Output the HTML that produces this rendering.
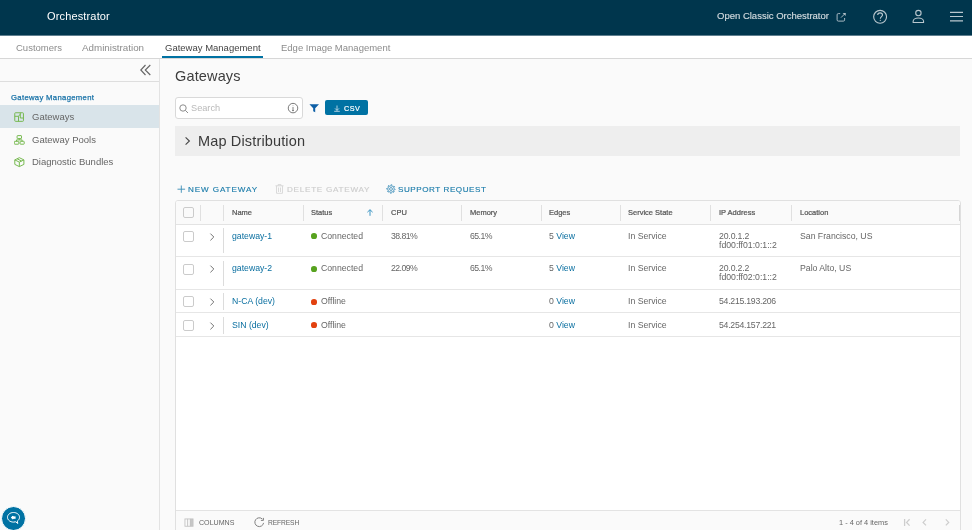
<!DOCTYPE html>
<html><head><meta charset="utf-8">
<style>
*{box-sizing:border-box;margin:0;padding:0}
html,body{width:972px;height:530px;overflow:hidden;background:#fafafa;font-family:"Liberation Sans",sans-serif;position:relative}
.a{position:absolute;white-space:nowrap;line-height:1;will-change:transform}
#hdr{position:absolute;left:0;top:0;width:972px;height:35px;background:#00364d}
#hdrline{position:absolute;left:0;top:35px;width:972px;height:1px;background:#5f7f8f}
#tabs{position:absolute;left:0;top:36px;width:972px;height:22px;background:#fff}
#tabline{position:absolute;left:0;top:58px;width:972px;height:1px;background:#d7d7d7}
#side{position:absolute;left:0;top:59px;width:159px;height:471px;background:#fafafa}
#sideb{position:absolute;left:159px;top:59px;width:1px;height:471px;background:#e3e3e3}
.tab{font-size:9.5px;color:#8c8c8c}
.nav{font-size:9.5px;color:#666}
.th{font-size:7.5px;color:#565656;-webkit-text-stroke-width:0.22px}
.td{font-size:8.7px;color:#666}
.pct{letter-spacing:-0.55px}
.ip{letter-spacing:-0.2px}
.lnk{color:#0a6fa0}
.vl{position:absolute;width:1px;background:#dcdcdc}
.hl{position:absolute;height:1px;background:#e3e3e3}
.cb{position:absolute;width:11px;height:11px;border:1px solid #b3b3b3;border-radius:2px;background:#fff}
.act{font-size:8.1px;letter-spacing:0.9px;color:#1b7caa;-webkit-text-stroke-width:0.15px}
</style></head><body>
<div id="hdr"></div><div id="hdrline"></div>
<div class="a" style="left:46.5px;top:10.8px;font-size:11px;letter-spacing:0.15px;color:#fff">Orchestrator</div>
<div class="a" style="left:716.5px;top:11.3px;font-size:9.5px;color:#d3dbdf;-webkit-text-stroke:0.15px #d3dbdf">Open Classic Orchestrator</div>
<!-- header icons -->
<svg class="a" style="left:835.6px;top:11.6px" width="11" height="11" viewBox="0 0 11 11" fill="none" stroke="#b0c0c8" stroke-width="0.95">
  <path d="M4.2 1.6H2.3Q1.1 1.6 1.1 2.8V7.9Q1.1 9.1 2.3 9.1H7.4Q8.6 9.1 8.6 7.9V6"/><path d="M5 5.6L9.2 1.4"/><path d="M6.6 0.9H9.7V4Z" fill="#b0c0c8" stroke="none"/>
</svg>
<svg class="a" style="left:872px;top:9px" width="16" height="16" viewBox="0 0 16 16" fill="none" stroke="#b9c7ce" stroke-width="1.1">
  <circle cx="8.1" cy="7.8" r="6.45"/>
  <path d="M5.7 6.1C5.7 4.6 6.8 3.9 8.1 3.9C9.5 3.9 10.5 4.8 10.5 6C10.5 7.6 8.3 7.8 8.3 9.8"/>
  <circle cx="8.3" cy="11.3" r="0.65" fill="#b9c7ce" stroke="none"/>
</svg>
<svg class="a" style="left:911px;top:9px" width="15" height="16" viewBox="0 0 15 16" fill="none" stroke="#b9c7ce" stroke-width="1.1">
  <circle cx="7.4" cy="4.05" r="2.7"/>
  <path d="M2.15 13.45V12.2C2.15 10.4 4.5 8.95 7.35 8.95C10.2 8.95 12.55 10.4 12.55 12.2V13.45Z"/>
</svg>
<svg class="a" style="left:949px;top:11px" width="15" height="11" viewBox="0 0 15 11" stroke="#b9c7ce" stroke-width="1.1">
  <path d="M1 1.4H14M1 5.5H14M1 9.9H14"/>
</svg>

<div id="tabs"></div><div id="tabline"></div>
<div class="a tab" style="left:16px;top:43px">Customers</div>
<div class="a tab" style="left:82.3px;top:43px;font-size:9.8px;top:42.8px">Administration</div>
<div class="a tab" style="left:164.5px;top:43px;color:#454545">Gateway Management</div>
<div class="a tab" style="left:281px;top:43px">Edge Image Management</div>
<div class="a" style="left:162px;top:56px;width:101px;height:2px;background:#0072a3"></div>

<div id="side"></div><div id="sideb"></div>
<svg class="a" style="left:139px;top:64px" width="14" height="12" viewBox="0 0 14 12" fill="none" stroke="#666" stroke-width="1">
  <path d="M6.5 1L1.8 6L6.5 11M11.3 1L6.3 6L11.3 11" stroke-width="1.15"/>
</svg>
<div class="a" style="left:0;top:81px;width:159px;height:1px;background:#dedede"></div>
<div class="a" style="left:10.8px;top:94.2px;font-size:7.7px;letter-spacing:0.33px;color:#1a73a8;-webkit-text-stroke:0.25px #1a73a8">Gateway Management</div>
<div class="a" style="left:0;top:105px;width:159px;height:23px;background:#d9e4ea"></div>
<div class="a nav" style="left:31.9px;top:112.2px">Gateways</div>
<div class="a nav" style="left:31.9px;top:135.3px">Gateway Pools</div>
<div class="a nav" style="left:31.9px;top:157.4px">Diagnostic Bundles</div>
<svg class="a" style="left:14px;top:111.5px" width="11" height="11" viewBox="0 0 11 11" fill="none" stroke="#72b64a" stroke-width="0.95">
  <rect x="0.75" y="0.75" width="8.7" height="8.6" rx="0.8"/>
  <path d="M0.75 4.3H4.5V9.35M4.5 4.3L6.3 2.1V0.75M6.3 2.1V6H9.45"/>
</svg>
<svg class="a" style="left:14px;top:134.5px" width="11" height="10" viewBox="0 0 11 10" fill="none" stroke="#72b64a" stroke-width="0.95">
  <rect x="3.1" y="0.6" width="4.4" height="3" rx="0.5"/>
  <rect x="0.3" y="6.3" width="4.5" height="2.9" rx="0.5"/>
  <rect x="6.1" y="6.3" width="4.1" height="2.9" rx="0.5"/>
  <path d="M5.3 3.6V4.9M2.5 6.3V4.9H8.1V6.3"/>
</svg>
<svg class="a" style="left:14px;top:157px" width="11" height="11" viewBox="0 0 11 11" fill="none" stroke="#72b64a" stroke-width="0.95">
  <path d="M5.35 0.7L9.9 2.9V7.4L5.35 9.6L0.8 7.4V2.9Z"/>
  <path d="M0.8 2.9L5.35 5.1L9.9 2.9M5.35 5.1V9.6M3.1 1.8L7.6 4"/>
</svg>

<!-- content -->
<div class="a" style="left:175px;top:68.8px;font-size:14.5px;letter-spacing:0.15px;color:#3d3d3d">Gateways</div>
<div class="a" style="left:175px;top:97px;width:128px;height:22px;background:#fff;border:1px solid #d9d9d9;border-radius:3px"></div>
<svg class="a" style="left:178.5px;top:103.5px" width="10" height="10" viewBox="0 0 10 10" fill="none" stroke="#8c8c8c" stroke-width="1">
  <circle cx="4" cy="4" r="3.2"/><path d="M6.4 6.4L9 9"/>
</svg>
<div class="a" style="left:191.2px;top:104.1px;font-size:9.2px;color:#b9b9b9">Search</div>
<svg class="a" style="left:286.5px;top:102px" width="12" height="12" viewBox="0 0 12 12" fill="none" stroke="#737373" stroke-width="0.95">
  <circle cx="6" cy="6.1" r="4.75"/><path d="M6 5V8.6M5 8.6H7" stroke-width="0.9"/><circle cx="6" cy="3.7" r="0.45" fill="#737373" stroke="none"/>
</svg>
<svg class="a" style="left:308.5px;top:103.7px" width="11" height="9" viewBox="0 0 11 9" fill="#0d5fa6">
  <path d="M0.4 0.2H10L6.2 4.2V8.2L4.2 7.2V4.2Z"/>
</svg>
<div class="a" style="left:325px;top:100px;width:43px;height:15px;background:#0072a3;border-radius:2px"></div>
<svg class="a" style="left:334.3px;top:104.6px" width="7" height="7" viewBox="0 0 7 7" fill="none" stroke="#d5e6f0" stroke-width="0.8">
  <path d="M3 0.5V5.4M1 3.4L3 5.4L5 3.4M0.2 6.3H5.8"/>
</svg>
<div class="a" style="left:343.9px;top:104.8px;font-size:7.2px;color:#fff;letter-spacing:0.45px;-webkit-text-stroke:0.2px #fff">CSV</div>

<div class="a" style="left:175px;top:126px;width:785px;height:30px;background:#eeeeee"></div>
<svg class="a" style="left:183.5px;top:136px" width="8" height="10" viewBox="0 0 8 10" fill="none" stroke="#454545" stroke-width="1.1">
  <path d="M1.6 1.3L5.4 5L1.6 8.7"/>
</svg>
<div class="a" style="left:198.3px;top:133.5px;font-size:14.5px;letter-spacing:0.15px;color:#3a3a3a">Map Distribution</div>

<!-- actions -->
<svg class="a" style="left:176.5px;top:185px" width="9" height="9" viewBox="0 0 9 9" fill="none" stroke="#3a8cb5" stroke-width="0.9">
  <path d="M4.3 0.5V7.8M0.5 4.2H8.1"/>
</svg>
<div class="a act" style="left:187.8px;top:185.6px">NEW GATEWAY</div>
<svg class="a" style="left:275px;top:184px" width="9" height="10" viewBox="0 0 9 10" fill="none" stroke="#d6d6d6" stroke-width="0.9">
  <path d="M0.5 1.8H8.5M3 1.8V0.6H6V1.8M1.5 1.8V9.3H7.5V1.8M3.5 3.5V8M5.5 3.5V8"/>
</svg>
<div class="a act" style="left:286.6px;top:185.6px;color:#cdcdcd;letter-spacing:0.75px">DELETE GATEWAY</div>
<svg class="a" style="left:385.8px;top:183.8px" width="10" height="10" viewBox="0 0 10 10" fill="none" stroke="#3f8fb9">
  <circle cx="5" cy="5" r="3.3" stroke-width="0.9"/>
  <circle cx="5" cy="5" r="4.25" stroke-width="1" stroke-dasharray="1.4 1.938" stroke-dashoffset="0.7"/>
  <circle cx="5" cy="5" r="1.45" stroke-width="0.85"/>
</svg>
<div class="a act" style="left:397.8px;top:185.6px;letter-spacing:0.55px">SUPPORT REQUEST</div>

<!-- grid -->
<div class="a" style="left:175px;top:200px;width:786px;height:340px;background:#fff;border:1px solid #e0e0e0;border-radius:3px;overflow:hidden"><div style="position:absolute;left:0;top:0;width:100%;height:24px;background:#fafafa;border-bottom:1px solid #e3e3e3"></div><div style="position:absolute;left:0;top:309px;width:100%;height:40px;background:#fafafa;border-top:1px solid #e3e3e3"></div></div>
<div class="a " style="left:200px;top:205px;width:1px;height:16px;background:#e0e0e0"></div>
<div class="a " style="left:223px;top:205px;width:1px;height:16px;background:#e0e0e0"></div>
<div class="a " style="left:303px;top:205px;width:1px;height:16px;background:#e0e0e0"></div>
<div class="a " style="left:382px;top:205px;width:1px;height:16px;background:#e0e0e0"></div>
<div class="a " style="left:461px;top:205px;width:1px;height:16px;background:#e0e0e0"></div>
<div class="a " style="left:541px;top:205px;width:1px;height:16px;background:#e0e0e0"></div>
<div class="a " style="left:620px;top:205px;width:1px;height:16px;background:#e0e0e0"></div>
<div class="a " style="left:710px;top:205px;width:1px;height:16px;background:#e0e0e0"></div>
<div class="a " style="left:791px;top:205px;width:1px;height:16px;background:#e0e0e0"></div>
<div class="a " style="left:959px;top:205px;width:1px;height:16px;background:#d5d5d5"></div>
<div class="a " style="left:183px;top:207px;width:11px;height:11px;border:1px solid #cbcbcb;border-radius:2px;background:#fff;background:transparent"></div>
<div class="a th" style="left:232px;top:208.55px">Name</div>
<div class="a th" style="left:311.3px;top:208.55px">Status</div>
<div class="a th" style="left:390.7px;top:208.55px">CPU</div>
<div class="a th" style="left:469.6px;top:208.55px">Memory</div>
<div class="a th" style="left:549px;top:208.55px">Edges</div>
<div class="a th" style="left:628.4px;top:208.55px">Service State</div>
<div class="a th" style="left:718.8px;top:208.55px">IP Address</div>
<div class="a th" style="left:799.6px;top:208.55px">Location</div>
<svg class="a" style="left:366px;top:209px" width="8" height="7" viewBox="0 0 8 7" fill="none" stroke="#3d96c4" stroke-width="1"><path d="M4 0.8V6.8M1.4 3.2L4 0.7L6.6 3.2"/></svg>
<div class="a " style="left:183px;top:231.0px;width:11px;height:11px;border:1px solid #cbcbcb;border-radius:2px;background:#fff"></div>
<svg class="a" style="left:208.5px;top:232.5px" width="7" height="8" viewBox="0 0 7 8" fill="none" stroke="#737373" stroke-width="1"><path d="M1.4 0.6L4.8 4L1.4 7.4"/></svg>
<div class="a " style="left:223px;top:228px;width:1px;height:25px;background:#dcdcdc"></div>
<div class="a td lnk" style="left:232px;top:231.55px">gateway-1</div>
<div class="a " style="left:310.5px;top:233.4px;width:5.7px;height:5.7px;border-radius:50%;background:#57a21f"></div>
<div class="a td" style="left:321px;top:231.55px">Connected</div>
<div class="a td pct" style="left:390.7px;top:231.55px">38.81%</div>
<div class="a td pct" style="left:469.6px;top:231.55px">65.1%</div>
<div class="a td" style="left:549px;top:231.55px">5 <span class="lnk">View</span></div>
<div class="a td" style="left:628.4px;top:231.55px">In Service</div>
<div class="a td" style="left:718.8px;top:231.55px;letter-spacing:-0.15px">20.0.1.2</div>
<div class="a td" style="left:718.8px;top:240.55px;letter-spacing:0px">fd00:ff01:0:1::2</div>
<div class="a td" style="left:799.6px;top:231.55px">San Francisco, US</div>
<div class="a " style="left:176px;top:256px;width:784px;height:1px;background:#e6e6e6"></div>
<div class="a " style="left:183px;top:263.7px;width:11px;height:11px;border:1px solid #cbcbcb;border-radius:2px;background:#fff"></div>
<svg class="a" style="left:208.5px;top:265.2px" width="7" height="8" viewBox="0 0 7 8" fill="none" stroke="#737373" stroke-width="1"><path d="M1.4 0.6L4.8 4L1.4 7.4"/></svg>
<div class="a " style="left:223px;top:261px;width:1px;height:25px;background:#dcdcdc"></div>
<div class="a td lnk" style="left:232px;top:264.25px">gateway-2</div>
<div class="a " style="left:310.5px;top:266.1px;width:5.7px;height:5.7px;border-radius:50%;background:#57a21f"></div>
<div class="a td" style="left:321px;top:264.25px">Connected</div>
<div class="a td pct" style="left:390.7px;top:264.25px">22.09%</div>
<div class="a td pct" style="left:469.6px;top:264.25px">65.1%</div>
<div class="a td" style="left:549px;top:264.25px">5 <span class="lnk">View</span></div>
<div class="a td" style="left:628.4px;top:264.25px">In Service</div>
<div class="a td" style="left:718.8px;top:264.25px;letter-spacing:-0.15px">20.0.2.2</div>
<div class="a td" style="left:718.8px;top:273.25px;letter-spacing:0px">fd00:ff02:0:1::2</div>
<div class="a td" style="left:799.6px;top:264.25px">Palo Alto, US</div>
<div class="a " style="left:176px;top:289px;width:784px;height:1px;background:#e6e6e6"></div>
<div class="a " style="left:183px;top:296.1px;width:11px;height:11px;border:1px solid #cbcbcb;border-radius:2px;background:#fff"></div>
<svg class="a" style="left:208.5px;top:297.6px" width="7" height="8" viewBox="0 0 7 8" fill="none" stroke="#737373" stroke-width="1"><path d="M1.4 0.6L4.8 4L1.4 7.4"/></svg>
<div class="a " style="left:223px;top:293px;width:1px;height:17px;background:#dcdcdc"></div>
<div class="a td lnk" style="left:232px;top:296.65px">N-CA (dev)</div>
<div class="a " style="left:310.5px;top:298.5px;width:5.7px;height:5.7px;border-radius:50%;background:#e2410f"></div>
<div class="a td" style="left:321px;top:296.65px">Offline</div>
<div class="a td" style="left:549px;top:296.65px">0 <span class="lnk">View</span></div>
<div class="a td" style="left:628.4px;top:296.65px">In Service</div>
<div class="a td" style="left:718.8px;top:296.65px;letter-spacing:-0.25px">54.215.193.206</div>
<div class="a " style="left:176px;top:312px;width:784px;height:1px;background:#e6e6e6"></div>
<div class="a " style="left:183px;top:320.0px;width:11px;height:11px;border:1px solid #cbcbcb;border-radius:2px;background:#fff"></div>
<svg class="a" style="left:208.5px;top:321.5px" width="7" height="8" viewBox="0 0 7 8" fill="none" stroke="#737373" stroke-width="1"><path d="M1.4 0.6L4.8 4L1.4 7.4"/></svg>
<div class="a " style="left:223px;top:317px;width:1px;height:17px;background:#dcdcdc"></div>
<div class="a td lnk" style="left:232px;top:320.55px">SIN (dev)</div>
<div class="a " style="left:310.5px;top:322.4px;width:5.7px;height:5.7px;border-radius:50%;background:#e2410f"></div>
<div class="a td" style="left:321px;top:320.55px">Offline</div>
<div class="a td" style="left:549px;top:320.55px">0 <span class="lnk">View</span></div>
<div class="a td" style="left:628.4px;top:320.55px">In Service</div>
<div class="a td" style="left:718.8px;top:320.55px;letter-spacing:-0.25px">54.254.157.221</div>
<div class="a " style="left:176px;top:336px;width:784px;height:1px;background:#e6e6e6"></div>
<!-- footer -->
<svg class="a" style="left:184px;top:517.5px" width="10" height="9" viewBox="0 0 10 9" fill="none" stroke="#c2c2c2" stroke-width="0.9"><rect x="6" y="0.9" width="3" height="7.3" fill="#c6c6c6" stroke="none"/><rect x="0.95" y="0.95" width="8.1" height="7.3"/><path d="M3.6 0.9V8.2M6.3 0.9V8.2"/></svg>
<div class="a" style="left:198.8px;top:519.6px;font-size:7.1px;color:#666">COLUMNS</div>
<svg class="a" style="left:253.5px;top:517.3px" width="11" height="11" viewBox="0 0 11 11" fill="none" stroke="#7a7a7a" stroke-width="0.95">
<path d="M8.3 2A4.4 4.4 0 1 0 9.6 5.9"/><path d="M9.4 0.9V3.4H6.9"/></svg>
<div class="a" style="left:268px;top:519.6px;font-size:6.7px;letter-spacing:-0.12px;color:#666">REFRESH</div>
<div class="a" style="left:839px;top:519px;font-size:7.4px;color:#666">1 - 4 of 4 items</div>
<svg class="a" style="left:903px;top:518px" width="8" height="9" viewBox="0 0 8 9" fill="none" stroke="#cdcdcd" stroke-width="1.3">
  <path d="M1.6 0.9V7.9M6.6 1.2L3.6 4.4L6.6 7.6"/></svg>
<svg class="a" style="left:920.5px;top:518px" width="7" height="9" viewBox="0 0 7 9" fill="none" stroke="#cdcdcd" stroke-width="1.2">
  <path d="M5 1.4L2.1 4.4L5 7.4"/></svg>
<svg class="a" style="left:943.7px;top:518px" width="7" height="9" viewBox="0 0 7 9" fill="none" stroke="#cdcdcd" stroke-width="1.2">
  <path d="M1.8 1.4L4.7 4.4L1.8 7.4"/></svg>
<!-- chat bubble -->
<div class="a" style="left:1px;top:506px;width:25px;height:25px;border-radius:50%;background:#0072a3;border:1px solid #fff"></div>
<svg class="a" style="left:6px;top:511px" width="15" height="14" viewBox="0 0 15 14" fill="none" stroke="#fff" stroke-width="1">
<path d="M7.5 1.5C4.1 1.5 1.5 3.6 1.5 6.3C1.5 9 4.1 11.1 7.5 11.1C8.3 11.1 9 11 9.7 10.8L11.8 12.5L11.3 10.1C12.6 9.2 13.5 7.9 13.5 6.3C13.5 3.6 10.9 1.5 7.5 1.5Z"/>
<path d="M5.2 6.6L7 5V8.1Z" fill="#fff"/><rect x="7" y="5.4" width="2.6" height="2.4" fill="#fff" stroke="none"/>
</svg>

</body></html>
